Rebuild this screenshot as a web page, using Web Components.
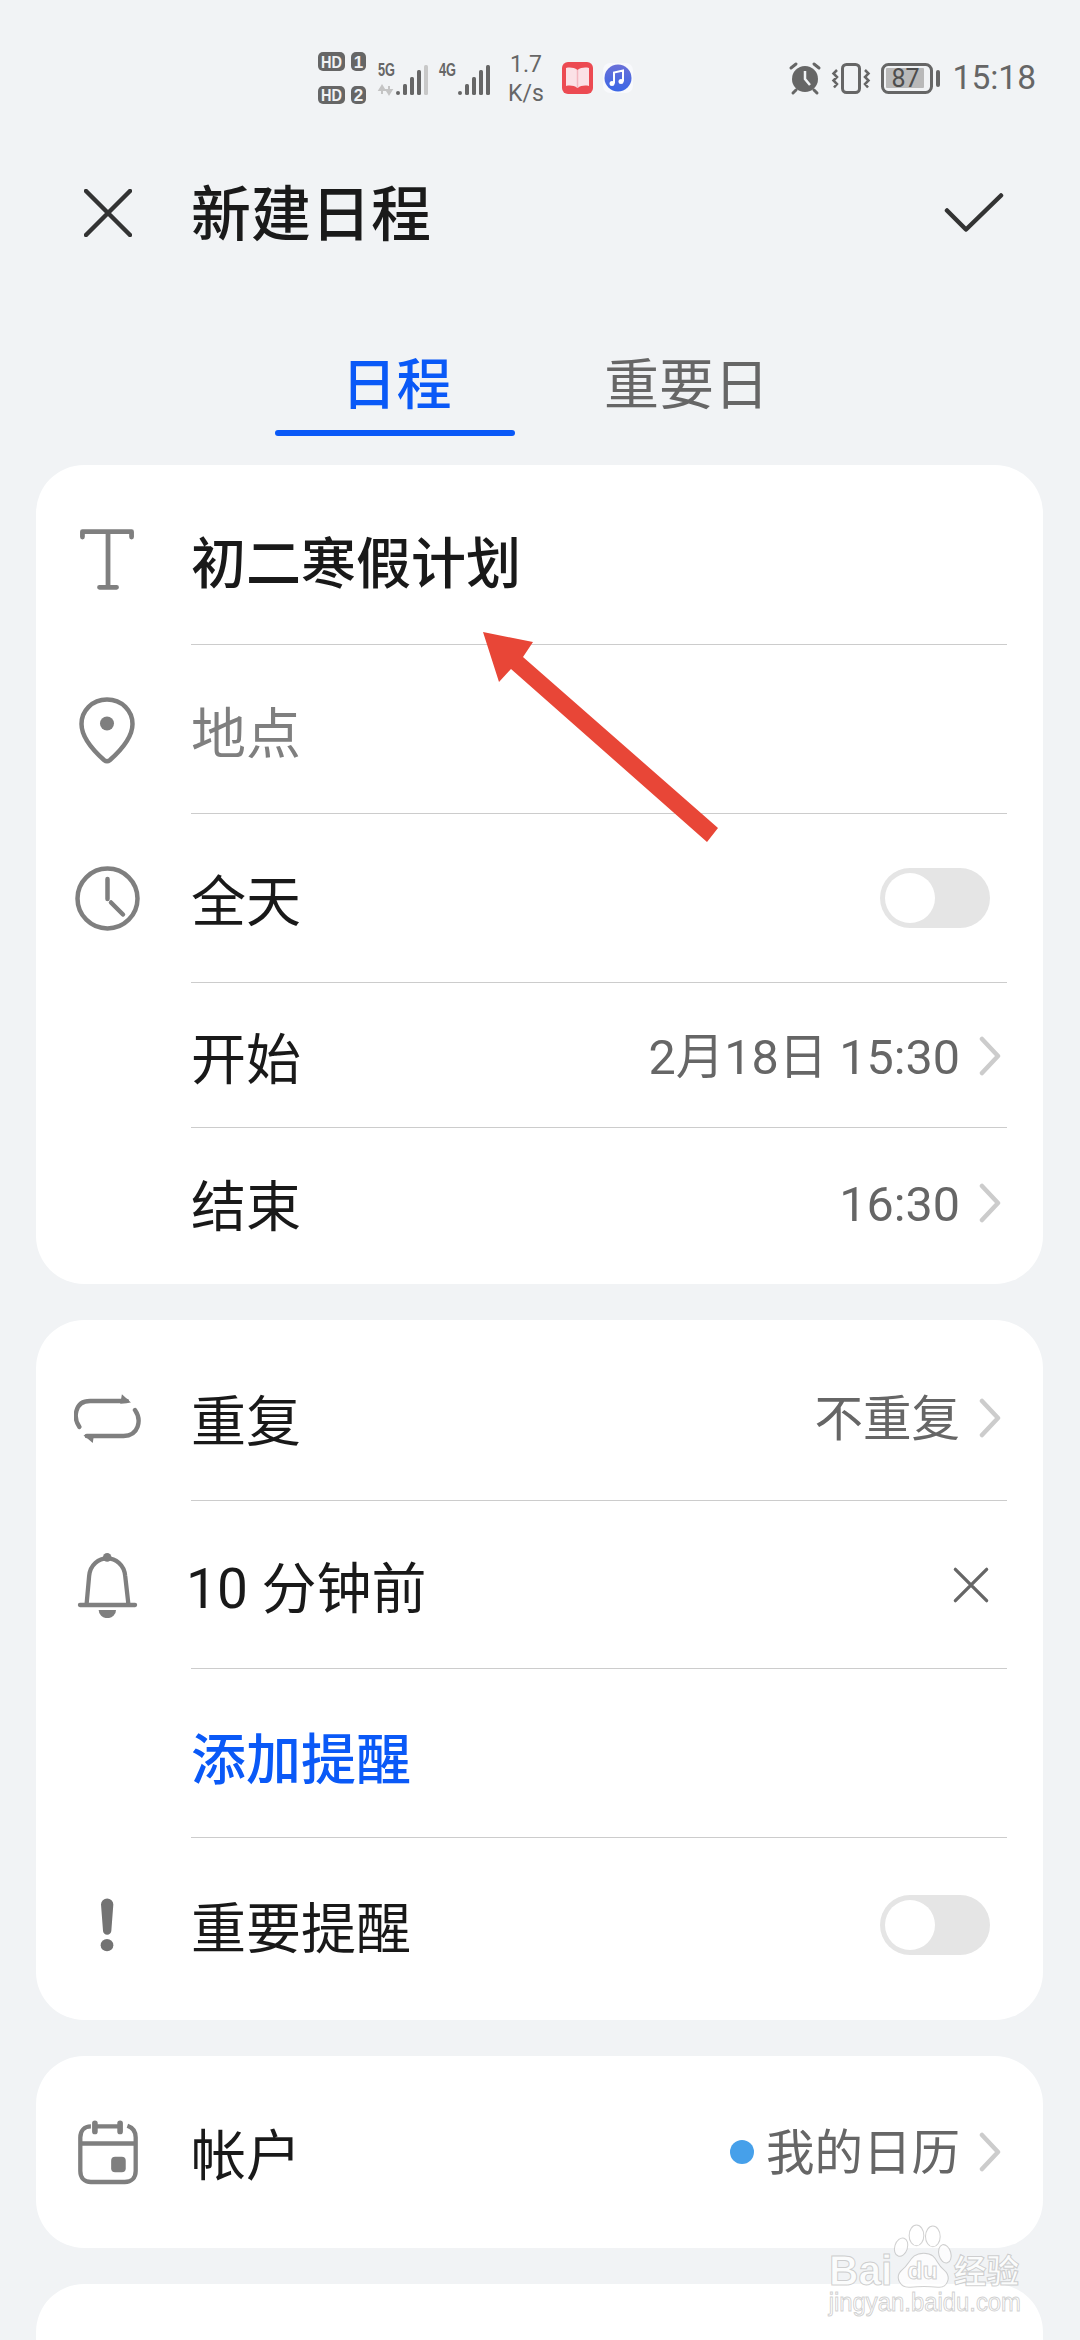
<!DOCTYPE html>
<html lang="zh"><head><meta charset="utf-8"><title>新建日程</title>
<style>
html,body{margin:0;padding:0;background:#f1f3f5}
body{width:1080px;height:2340px;overflow:hidden;font-family:Roboto,"Noto Sans CJK SC",sans-serif;color:#191919}
</style></head><body>
<x-page>
  <x-status></x-status>
  <x-header>新建日程</x-header>
  <x-tabs></x-tabs>
  <x-card>
    <x-row h="180" shift="5" icon="text" line><b>初二寒假计划</b></x-row>
    <x-row h="169" shift="1" icon="pin" line tone="muted">地点</x-row>
    <x-row h="169" icon="clock" line>全天<x-toggle slot="end"></x-toggle></x-row>
    <x-row h="145" shift="1" line>开始<x-value slot="end" chevron>2月18日 15:30</x-value></x-row>
    <x-row h="156" shift="-3">结束<x-value slot="end" chevron>16:30</x-value></x-row>
  </x-card>
  <x-card>
    <x-row h="181" shift="8" icon="repeat" line>重复<x-value slot="end" chevron>不重复</x-value></x-row>
    <x-row h="168" icon="bell" line inset="-5">10 分钟前<x-icon slot="end" name="dismiss"></x-icon></x-row>
    <x-row h="169" shift="3" line tone="link">添加提醒</x-row>
    <x-row h="182" shift="-4" icon="important">重要提醒<x-toggle slot="end"></x-toggle></x-row>
  </x-card>
  <x-card>
    <x-row h="192" icon="calendar">帐户<x-value slot="end" chevron dot>我的日历</x-value></x-row>
  </x-card>
  <x-card style="height:120px"></x-card>
  <x-arrow></x-arrow>
  <x-watermark></x-watermark>
</x-page>
<script>
const ICONS={
 text:[58,66,'225 1135 170 196',`<path d="M238 1165V1149H382V1165M313 1150V1312M288 1314H338" fill="none" stroke="#7f7f7f" stroke-width="14" stroke-linecap="round" stroke-linejoin="round"/>`],
 pin:[56,67,'0 0 56 67',`<path d="M28 2.5C13 2.5 2.5 14 2.5 27C2.5 41 16 55 25 63Q28 65.5 31 63C40 55 53.5 41 53.5 27C53.5 14 43 2.5 28 2.5Z" fill="none" stroke="#7f7f7f" stroke-width="4.5"/><circle cx="28" cy="26.5" r="7" fill="#7f7f7f"/>`],
 clock:[65,65,'0 0 65 65',`<circle cx="32.5" cy="32.5" r="30" fill="none" stroke="#7f7f7f" stroke-width="4.5"/><path d="M32.5 13V33M36 36.5L48 48.5" fill="none" stroke="#7f7f7f" stroke-width="4.5" stroke-linecap="round"/>`],
 repeat:[67,49,'222 97 200 146',`<path d="M238 195C220 170 222 118 270 118H380M404 145C425 175 415 222 370 222H260" fill="none" stroke="#7f7f7f" stroke-width="13" stroke-linecap="round"/><path d="M365 98L392 122L360 126ZM278 243L250 219L282 216Z" fill="#7f7f7f"/>`],
 bell:[61,66,'228 578 186 198',`<path d="M237 737H405M257 737L265 650C268 615 295 597 320 597C345 597 372 615 375 650L385 737" fill="none" stroke="#7f7f7f" stroke-width="13" stroke-linecap="round"/><circle cx="320" cy="594" r="13" fill="#7f7f7f"/><path d="M294 752H347A26 24 0 0 1 294 752Z" fill="#7f7f7f"/>`],
 important:[14,54,'299 108 42 165',`<path d="M302 128a18.500 18.500 0 0 1 37 0L333 208a12.500 12.500 0 0 1-25 0Z" fill="#737373"/><circle cx="320" cy="252" r="19" fill="#737373"/>`],
 calendar:[63,67,'75 50 190 200',`<path d="M120 72C100 72 88 85 88 105V205C88 225 100 238 120 238H222C242 238 255 225 255 205V105C255 88 245 75 230 70M132 72H208M88 123H255" fill="none" stroke="#7f7f7f" stroke-width="13"/><path d="M132 63V87M208 63V87" stroke="#7f7f7f" stroke-width="17" stroke-linecap="round"/><rect x="181" y="163" width="44" height="46" rx="12" fill="#7f7f7f"/>`],
 dismiss:[36,36,'0 0 38 38',`<path d="M2.500 2.500L35.500 35.500M35.500 2.500L2.500 35.500" stroke="#666" stroke-width="3.500" stroke-linecap="round"/>`],
 chevron:[22,40,'0 0 22 40',`<path d="M3 3L19 20L3 37" fill="none" stroke="#ccc" stroke-width="4.500" stroke-linecap="round" stroke-linejoin="round"/>`]
};
const def=(n,c)=>customElements.define(n,c);
function shadow(el,html){el.attachShadow({mode:'open'}).innerHTML=html;}

def('x-icon',class extends HTMLElement{connectedCallback(){
  const [w,h,vb,p]=ICONS[this.getAttribute('name')];
  shadow(this,`<style>:host{display:block;width:${w}px;height:${h}px;flex:none}svg{display:block}</style><svg width="${w}" height="${h}" viewBox="${vb}" preserveAspectRatio="none">${p}</svg>`);
}});

def('x-page',class extends HTMLElement{constructor(){super();
  shadow(this,`<style>:host{display:block;position:relative;width:1080px;height:2340px;overflow:hidden}</style><slot></slot>`);
}});

def('x-status',class extends HTMLElement{constructor(){super();
  const g='#666';
  const bars=(x0,tops,fills)=>tops.map((t,i)=>`<rect x="${x0+i*7}" y="${t}" width="4" height="${33-t}" rx="${i==0?2:1.500}" fill="${fills&&fills[i]||g}"/>`).join('');
  shadow(this,`<style>
  :host{display:flex;align-items:center;height:156px;box-sizing:border-box;padding:0 44px 0 318px;color:#666;font-family:Roboto,sans-serif}
  svg{display:block;flex:none;overflow:visible}
  svg text{font-family:"Liberation Sans",sans-serif;font-weight:700}
  .speed{display:flex;flex-direction:column;align-items:center;width:36px;margin:2px 18px 0 18px;font-size:23px;line-height:29px;white-space:nowrap}
  .time{font-size:33.500px;line-height:40px;margin-left:12px}
  .sp{flex:1}
  </style>
  <svg width="48" height="52" viewBox="0 0 48 52"><rect x="0" y="0" width="27" height="19" rx="5" fill="${g}"/><rect x="33" y="0" width="15" height="19" rx="5" fill="${g}"/><rect x="0" y="34" width="27" height="18" rx="5" fill="${g}"/><rect x="33" y="34" width="15" height="18" rx="5" fill="${g}"/>
  <g fill="#f1f3f5" font-size="17" text-anchor="middle"><text x="13.500" y="15.500" textLength="21" lengthAdjust="spacingAndGlyphs">HD</text><text x="40.500" y="15.500">1</text><text x="13.500" y="49" textLength="21" lengthAdjust="spacingAndGlyphs">HD</text><text x="40.500" y="49">2</text></g></svg>
  <svg width="50" height="33" viewBox="0 0 50 33" style="margin-left:12px"><text x="0" y="14" font-size="18" fill="${g}" textLength="17" lengthAdjust="spacingAndGlyphs">5G</text>
  <path d="M4 32V25M4 24L1.500 28H6.500ZM11 24V31M11 32L8.500 28H13.500Z" stroke="#c4c4c4" stroke-width="2" fill="#c4c4c4"/>${bars(18,[29,22,15,8,3],[0,0,0,0,'#c8c8c8'])}</svg>
  <svg width="51" height="33" viewBox="0 0 51 33" style="margin-left:11px"><text x="0" y="14" font-size="18" fill="${g}" textLength="17" lengthAdjust="spacingAndGlyphs">4G</text>${bars(19,[29,22,15,8,3])}</svg>
  <div class="speed"><span>1.7</span><span>K/s</span></div>
  <svg width="31" height="32" viewBox="0 0 31 32"><rect width="31" height="32" rx="6" fill="#ec4a52"/><path d="M4 6C8 5 12 5.500 15.500 8C19 5.500 23 5 27 6V24C23 23 19 23.500 15.500 26C12 23.500 8 23 4 24Z" fill="#fbe1e6"/><path d="M15.500 8V26" stroke="#f3b6bf" stroke-width="1.500"/></svg>
  <svg width="30" height="30" viewBox="0 0 30 30" style="margin-left:10px"><defs><linearGradient id="m" x1="0" y1="0" x2="0" y2="1"><stop offset="0" stop-color="#6a70d8"/><stop offset="1" stop-color="#3a66e6"/></linearGradient></defs><rect width="30" height="30" rx="7" fill="#f8f9fc"/><circle cx="15" cy="15" r="13.500" fill="url(#m)"/><path d="M11 20.500V9.500L20 7.500V18.500" fill="none" stroke="#fff" stroke-width="2"/><circle cx="9" cy="20.500" r="2.500" fill="#fff"/><circle cx="18" cy="18.500" r="2.500" fill="#fff"/></svg>
  <div class="sp"></div>
  <svg width="32" height="32" viewBox="0 0 32 32"><circle cx="16" cy="17" r="13" fill="${g}"/><path d="M16 9V17L21 23" fill="none" stroke="#f1f3f5" stroke-width="2.500"/><path d="M2 6L7 2M30 6L25 2M7 28L4 31M25 28L28 31" stroke="${g}" stroke-width="3" stroke-linecap="round"/></svg>
  <svg width="38" height="31" viewBox="0 0 38 31" style="margin-left:11px"><rect x="10.500" y="1.500" width="17" height="28" rx="4" fill="none" stroke="${g}" stroke-width="3"/><path d="M5 7L1.500 10.500L5 14L1.500 17.500L5 21L2 24.500M33 7L36.500 10.500L33 14L36.500 17.500L33 21L36 24.500" fill="none" stroke="${g}" stroke-width="2.500"/></svg>
  <svg width="60" height="31" viewBox="0 0 60 31" style="margin-left:11px"><rect x="1.500" y="1.500" width="49" height="28" rx="6" fill="none" stroke="${g}" stroke-width="3"/><rect x="5" y="5" width="38" height="20" rx="1" fill="#b9b9b9"/><rect x="55" y="7" width="4" height="17" rx="2" fill="${g}"/><text x="24.500" y="24" font-size="25" text-anchor="middle" fill="#4d4d4d" style="font-family:Roboto,sans-serif;font-weight:400">87</text></svg>
  <div class="time">15:18</div>`);
}});

def('x-header',class extends HTMLElement{constructor(){super();
  shadow(this,`<style>:host{display:flex;align-items:center;height:114px;padding:0 76px 0 84px;box-sizing:border-box}
  svg{display:block;flex:none}.t{font-size:60px;line-height:70px;margin-left:59px;padding-top:6px;font-weight:500;flex:1;color:#1a1a1a}</style>
  <svg width="48" height="48" viewBox="0 0 48 48"><path d="M2 2L46 46M46 2L2 46" stroke="#333" stroke-width="4.500" stroke-linecap="round"/></svg>
  <div class="t"><slot></slot></div>
  <svg width="60" height="40" viewBox="0 0 60 40"><path d="M3 17.500L22 36.500L57 2.500" fill="none" stroke="#333" stroke-width="4.500" stroke-linecap="round" stroke-linejoin="round"/></svg>`);
}});

def('x-tabs',class extends HTMLElement{constructor(){super();
  shadow(this,`<style>:host{display:flex;height:195px;box-sizing:border-box;padding:85px 0 0 275px;font-size:55px;line-height:60px}
  .tab{display:flex;flex-direction:column;align-items:center;height:81px}
  .a{width:240px;color:#0a59f7;font-weight:500}.a span{padding-left:3px}.a i{display:block;width:240px;height:6px;border-radius:3px;background:#0a59f7;margin-top:15px}
  .b{margin-left:89px;color:#666;font-weight:400}</style>
  <div class="tab a"><span>日程</span><i></i></div><div class="tab b"><span>重要日</span></div>`);
}});

def('x-card',class extends HTMLElement{constructor(){super();
  shadow(this,`<style>:host{display:block;margin:0 37px 36px 36px;background:#fff;border-radius:48px;overflow:hidden}</style><slot></slot>`);
}});

def('x-row',class extends HTMLElement{connectedCallback(){
  const h=+this.getAttribute('h')||160,s=+this.getAttribute('shift')||0,ic=this.getAttribute('icon');
  const tone=this.getAttribute('tone');
  const col=tone=='muted'?'#7f7f7f':tone=='link'?'#0a59f7':'#191919';
  const pad=s>=0?`padding-top:${2*s}px`:`padding-bottom:${-2*s}px`;
  const inset=+this.getAttribute('inset')||0;
  shadow(this,`<style>:host{display:flex;height:${h}px}
  .ic{width:142px;margin-right:13px;flex:none;display:flex;align-items:center;justify-content:center;box-sizing:border-box;${pad}}
  .m{flex:1;min-width:0;margin-right:36px;display:flex;align-items:center;box-sizing:border-box;${pad};${this.hasAttribute('line')?'border-bottom:1.500px solid #ccc':''}}
  .l{flex:1;font-size:55px;line-height:70px;padding-top:8px;color:${col};margin-left:${inset}px;font-weight:${tone=='link'?500:400}}
  ::slotted(b){font-weight:500}
  ::slotted(x-toggle){margin-right:17px}
  ::slotted(x-icon){margin-right:18px}
  </style>
  <div class="ic">${ic?`<x-icon name="${ic}"></x-icon>`:''}</div>
  <div class="m"><div class="l"><slot></slot></div><slot name="end"></slot></div>`);
}});

def('x-value',class extends HTMLElement{connectedCallback(){
  shadow(this,`<style>:host{display:flex;align-items:center;font-size:48.500px;line-height:60px;color:#666;margin-right:6px}
  .d{width:24px;height:24px;border-radius:50%;background:#46a0ea;margin-right:12px}
  span{padding-top:3px}
  x-icon{margin-left:19px}</style>
  ${this.hasAttribute('dot')?'<i class="d"></i>':''}<span><slot></slot></span><x-icon name="chevron"></x-icon>`);
}});

def('x-toggle',class extends HTMLElement{constructor(){super();
  shadow(this,`<style>:host{display:block;width:110px;height:60px;border-radius:30px;background:#e5e5e5;flex:none;position:relative}
  i{position:absolute;left:5px;top:5px;width:50px;height:50px;border-radius:50%;background:#fff}</style><i></i>`);
}});

def('x-arrow',class extends HTMLElement{constructor(){super();
  shadow(this,`<style>:host{position:absolute;left:480px;top:628px;width:242px;height:218px}svg{display:block}</style>
  <svg width="242" height="218" viewBox="480 628 242 218"><path d="M483 632L533 642L523 657L718 828L707 842L511 669L499 682Z" fill="#e84637"/></svg>`);
}});

def('x-watermark',class extends HTMLElement{constructor(){super();
  shadow(this,`<style>:host{position:absolute;left:826.670px;top:2223.330px;width:197px;height:97px}svg{display:block;overflow:visible}
  g{fill:rgba(255,255,255,.75);stroke:rgba(170,170,170,.55);stroke-width:3}
  text{font-weight:700}
  .lat{font-family:"Liberation Sans",sans-serif}.cjk{font-family:"Noto Sans CJK SC",sans-serif}</style>
  <svg width="197" height="97" viewBox="440 550 590 290"><g>
  <text class="lat" x="446" y="735" font-size="130" textLength="190" lengthAdjust="spacingAndGlyphs">Bai</text>
  <ellipse cx="662" cy="622" rx="19" ry="28" transform="rotate(18 662 622)"/><ellipse cx="708" cy="587" rx="22" ry="31"/><ellipse cx="757" cy="590" rx="22" ry="31"/><ellipse cx="793" cy="642" rx="18" ry="28" transform="rotate(-15 793 642)"/>
  <path d="M730 640C690 640 690 672 665 690C640 712 660 745 690 742C710 740 750 740 772 742C800 745 815 712 790 690C765 672 770 640 730 640Z"/>
  <text class="lat" x="680" y="718" font-size="70" textLength="92" lengthAdjust="spacingAndGlyphs">du</text>
  <text class="cjk" x="820" y="728" font-size="98" textLength="196" lengthAdjust="spacingAndGlyphs">经验</text>
  <text class="lat" x="445" y="812" font-size="78" textLength="576" lengthAdjust="spacingAndGlyphs" style="font-weight:400">jingyan.baidu.com</text>
  </g></svg>`);
}});
</script>
</body></html>
